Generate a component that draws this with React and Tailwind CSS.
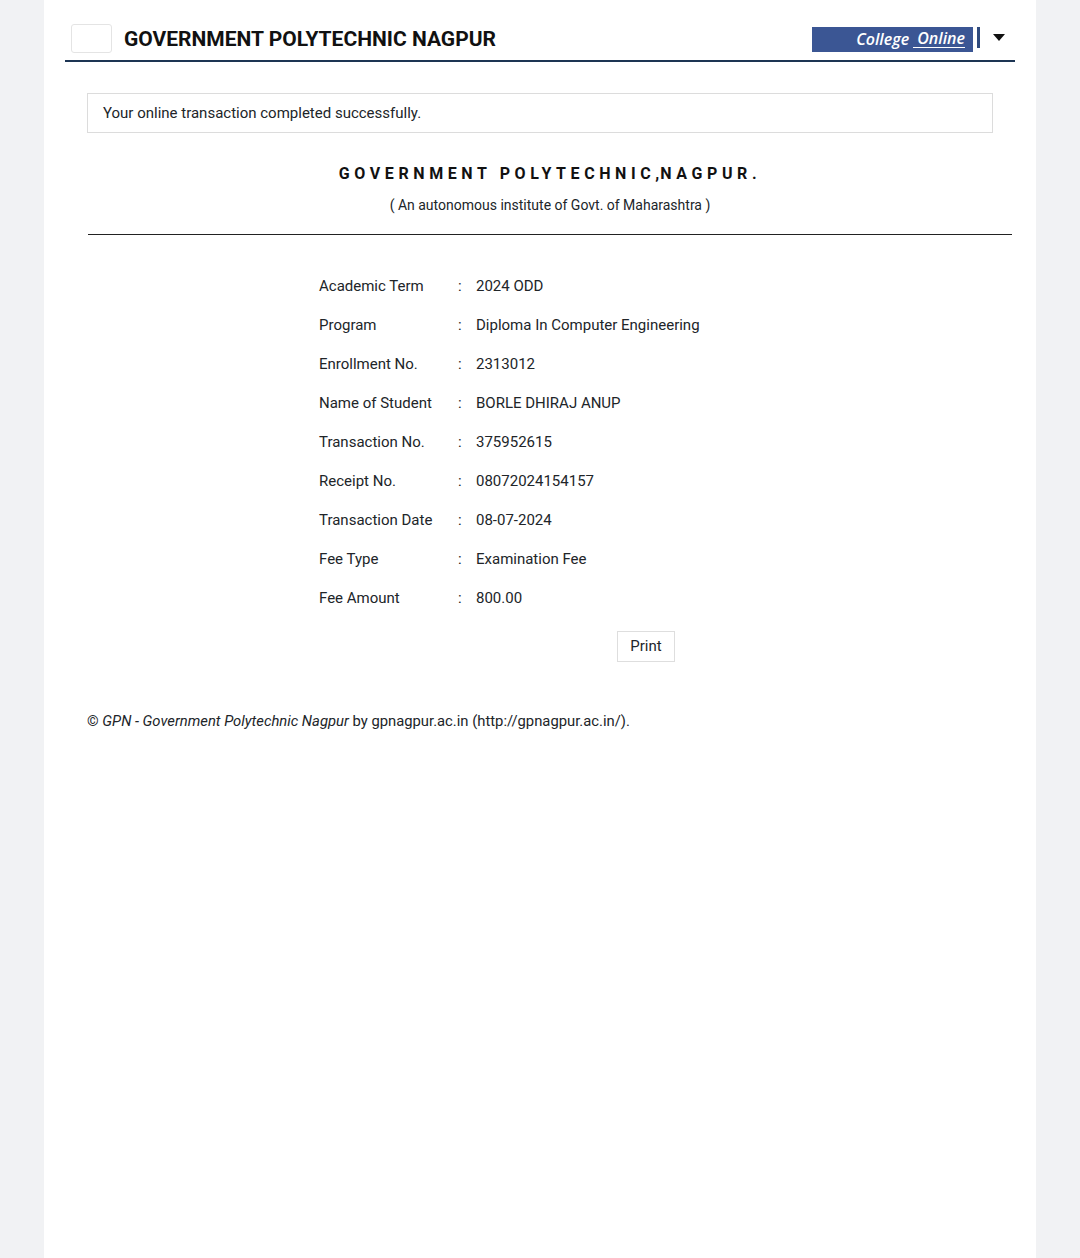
export default function App() {
  const rows = [
    ["Academic Term", "2024 ODD"],
    ["Program", "Diploma In Computer Engineering"],
    ["Enrollment No.", "2313012"],
    ["Name of Student", "BORLE DHIRAJ ANUP"],
    ["Transaction No.", "375952615"],
    ["Receipt No.", "08072024154157"],
    ["Transaction Date", "08-07-2024"],
    ["Fee Type", "Examination Fee"],
    ["Fee Amount", "800.00"],
  ];

  return (
    <div className="min-h-[1258px] bg-[#f1f2f4] font-['Roboto',sans-serif] text-[#212529]">
      <div className="mx-auto min-h-[1258px] w-[992px] bg-white">
        {/* header */}
        <div className="mx-[21px] flex h-[62px] items-center border-b-2 border-[#1d3553] pt-[18px]">
          <div className="ml-[6px] mb-[2px] h-[29px] w-[41px] rounded-[3px] border border-[#e4e4e4] bg-white" />
          <div className="ml-[12px] text-[21px] font-bold leading-none text-[#111]">
            GOVERNMENT POLYTECHNIC NAGPUR
          </div>
          <div className="ml-auto flex items-center">
            <div className="flex h-[25px] w-[161px] items-center justify-end bg-[#3b5694] pr-[8px] font-['Open_Sans',sans-serif] text-[16px] font-semibold italic leading-none text-white">
              <span>College</span>
              <span className="ml-[4px] border-b border-white pb-[1px]">&nbsp;Online</span>
            </div>
            <div className="ml-[4px] h-[21px] w-[3px] self-start bg-[#2f4a7d]" />
            <svg width="12" height="8" viewBox="0 0 12 8" className="ml-[13px] mr-[10px] mb-[2px]">
              <path d="M0 0 L12 0 L6 7 Z" fill="#111" />
            </svg>
          </div>
        </div>

        {/* alert */}
        <div className="mx-[43px] mt-[31px] flex h-[40px] items-center border border-[#dcdcdc] px-[15px] text-[15px]">
          Your online transaction completed successfully.
        </div>

        {/* heading */}
        <div className="ml-[44px] mr-[24px]">
          <div className="mt-[33px] text-center text-[16px] font-bold leading-none tracking-[4.6px] text-[#111]">
            GOVERNMENT POLYTECHNIC<span className="tracking-[1px]">,</span>NAGPUR.
          </div>
          <div className="mt-[16px] text-center text-[14px] leading-none">
            ( An autonomous institute of Govt. of Maharashtra )
          </div>
          <div className="mt-[22px] border-b border-[#222]" />
        </div>

        {/* details */}
        <div className="ml-[275px] mt-[41px] grid grid-cols-[139px_18px_auto] gap-y-[19px] text-[15px] leading-[20px]">
          {rows.map(([label, value]) => (
            <div key={label} className="contents">
              <div>{label}</div>
              <div>:</div>
              <div>{value}</div>
            </div>
          ))}
        </div>

        <div className="ml-[573px] mt-[23px]">
          <button className="h-[31px] w-[58px] border border-[#dedede] bg-white text-[15px] text-[#212529]">
            Print
          </button>
        </div>

        {/* footer */}
        <div className="ml-[43px] mt-[52px] text-[14.8px] leading-none">
          © <i>GPN - Government Polytechnic Nagpur</i> by gpnagpur.ac.in (http://gpnagpur.ac.in/).
        </div>
      </div>
    </div>
  );
}
